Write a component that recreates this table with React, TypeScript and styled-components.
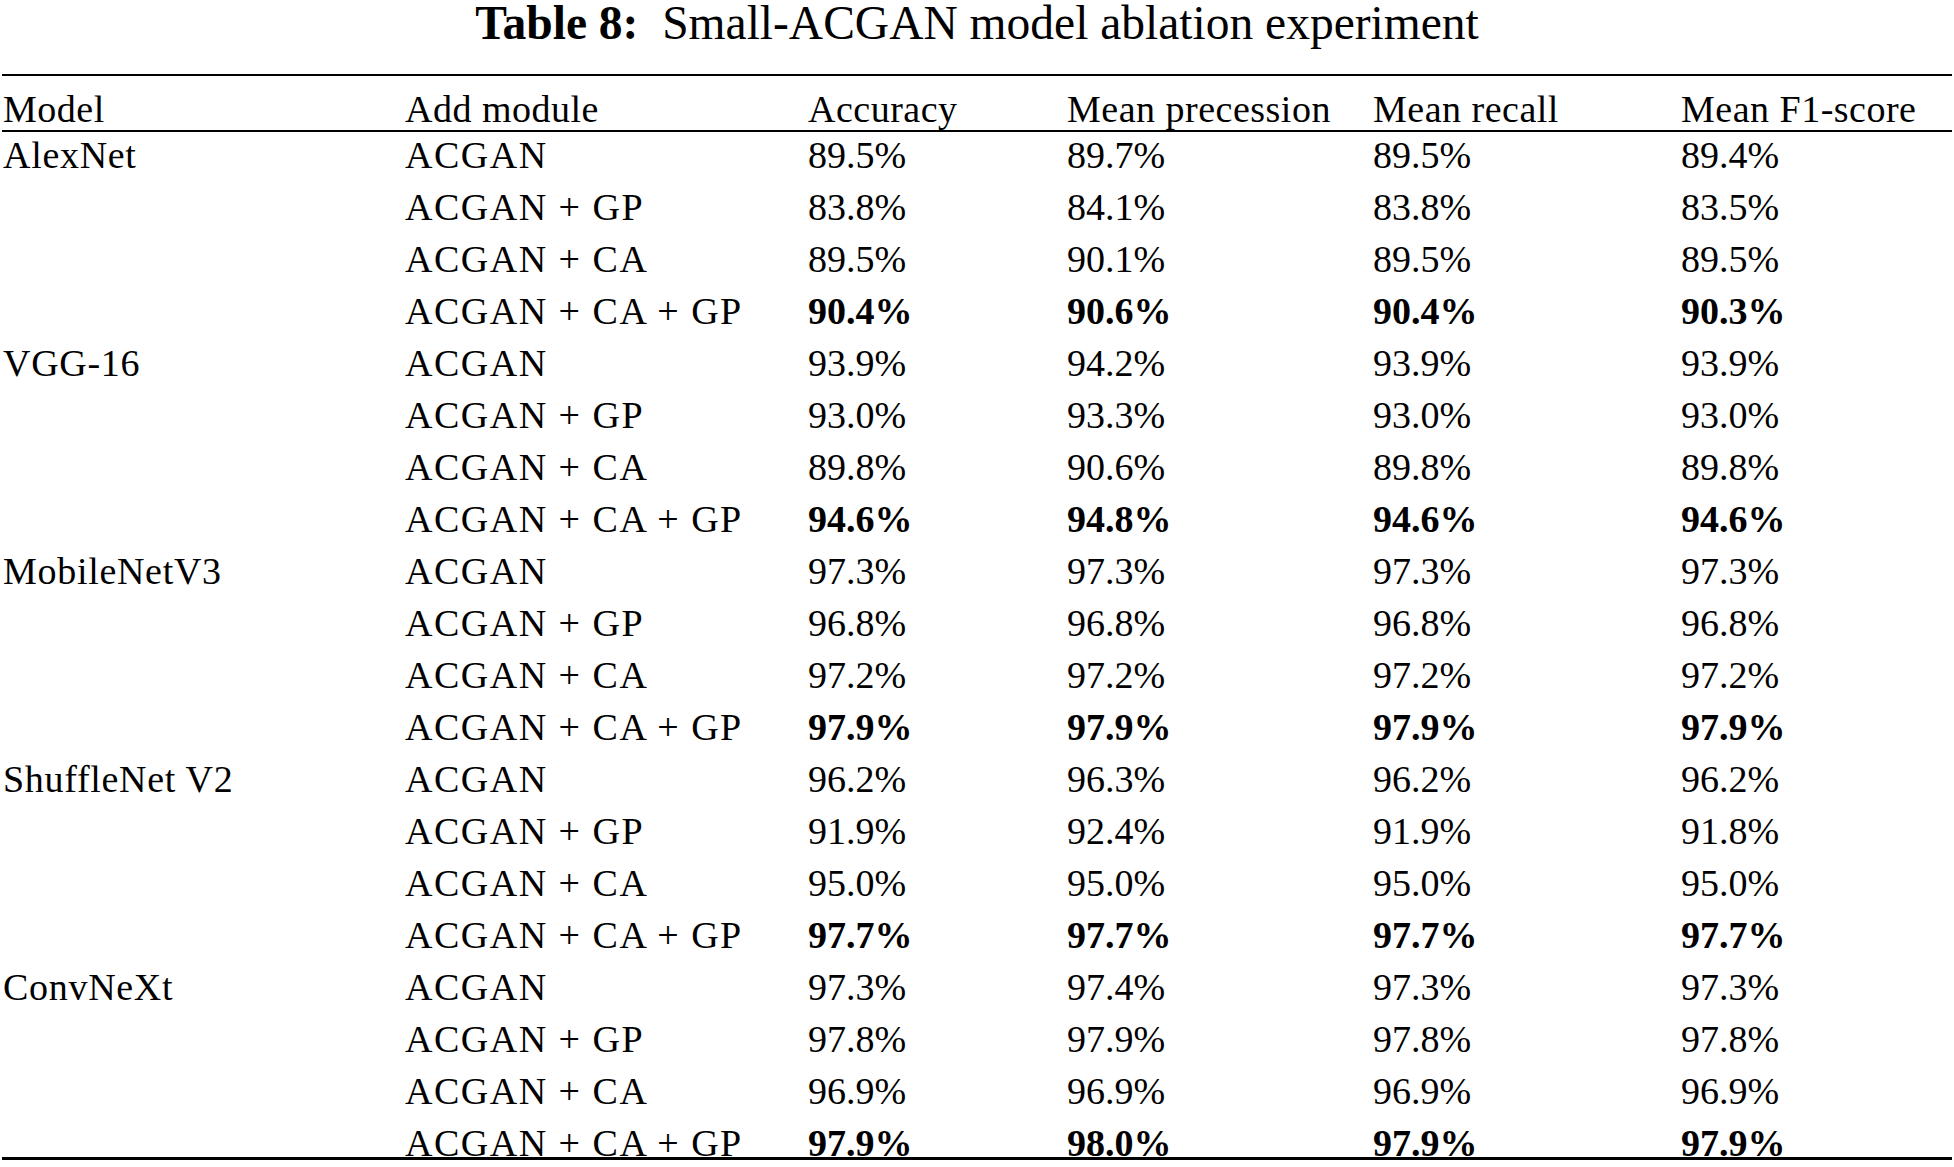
import * as React from "react";
import styled, { createGlobalStyle } from "styled-components";

const modules = ["ACGAN", "ACGAN + GP", "ACGAN + CA", "ACGAN + CA + GP"];

const groups: { model: string; rows: string[][] }[] = [
  {
    model: "AlexNet",
    rows: [
      ["89.5", "89.7", "89.5", "89.4"],
      ["83.8", "84.1", "83.8", "83.5"],
      ["89.5", "90.1", "89.5", "89.5"],
      ["90.4", "90.6", "90.4", "90.3"],
    ],
  },
  {
    model: "VGG-16",
    rows: [
      ["93.9", "94.2", "93.9", "93.9"],
      ["93.0", "93.3", "93.0", "93.0"],
      ["89.8", "90.6", "89.8", "89.8"],
      ["94.6", "94.8", "94.6", "94.6"],
    ],
  },
  {
    model: "MobileNetV3",
    rows: [
      ["97.3", "97.3", "97.3", "97.3"],
      ["96.8", "96.8", "96.8", "96.8"],
      ["97.2", "97.2", "97.2", "97.2"],
      ["97.9", "97.9", "97.9", "97.9"],
    ],
  },
  {
    model: "ShuffleNet V2",
    rows: [
      ["96.2", "96.3", "96.2", "96.2"],
      ["91.9", "92.4", "91.9", "91.8"],
      ["95.0", "95.0", "95.0", "95.0"],
      ["97.7", "97.7", "97.7", "97.7"],
    ],
  },
  {
    model: "ConvNeXt",
    rows: [
      ["97.3", "97.4", "97.3", "97.3"],
      ["97.8", "97.9", "97.8", "97.8"],
      ["96.9", "96.9", "96.9", "96.9"],
      ["97.9", "98.0", "97.9", "97.9"],
    ],
  },
];

const headers = [
  "Model",
  "Add module",
  "Accuracy",
  "Mean precession",
  "Mean recall",
  "Mean F1-score",
];

export default () => {
  const total = groups.length * modules.length;
  let index = 0;
  return (
    <>
      <GlobalStyle />
      <Page>
        <Caption>
          <b>Table 8:</b>&nbsp;&nbsp;Small-ACGAN model ablation experiment
        </Caption>
        <Table>
          <HeadRow>
            {headers.map((h) => (
              <Cell key={h} $spread={0.5}>
                {h}
              </Cell>
            ))}
          </HeadRow>
          {groups.map((g) =>
            g.rows.map((values, i) => {
              index += 1;
              const best = i === modules.length - 1;
              return (
                <BodyRow key={g.model + i} $last={index === total}>
                  <Cell $spread={0.7}>{i === 0 ? g.model : ""}</Cell>
                  <Cell $spread={1.5}>{modules[i]}</Cell>
                  {values.map((v, j) => (
                    <Cell key={j} $bold={best}>
                      {v}%
                    </Cell>
                  ))}
                </BodyRow>
              );
            })
          )}
        </Table>
      </Page>
    </>
  );
};

const GlobalStyle = createGlobalStyle`
  *, *::before, *::after {
    box-sizing: border-box;
  }
  html, body {
    margin: 0;
    padding: 0;
    background: #fff;
  }
  body {
    font-family: "Liberation Serif", "Times New Roman", serif;
    color: #000;
  }
`;

const Page = styled.div`
  width: 1954px;
  display: flex;
  flex-direction: column;
`;

const Caption = styled.div`
  font-size: 47.5px;
  line-height: 47px;
  text-align: center;
  white-space: pre;

  b {
    font-weight: 700;
  }
`;

const Table = styled.div`
  margin: 27px 2px 0;
  border-top: 2px solid #000;
  border-bottom: 3px solid #000;
  display: flex;
  flex-direction: column;
`;

const Row = styled.div`
  display: grid;
  grid-template-columns: 402px 403px 259px 306px 308px 1fr;
  padding-left: 1px;
  font-size: 38px;
  line-height: 42px;
`;

const HeadRow = styled(Row)`
  padding-top: 12px;
  border-bottom: 2px solid #000;
`;

const BodyRow = styled(Row)<{ $last?: boolean }>`
  height: ${(p) => (p.$last ? "37px" : "52px")};
  padding-top: 2px;
`;

const Cell = styled.div<{ $bold?: boolean; $spread?: number }>`
  white-space: pre;
  font-weight: ${(p) => (p.$bold ? 700 : 400)};
  letter-spacing: ${(p) => p.$spread ?? 0}px;
`;
